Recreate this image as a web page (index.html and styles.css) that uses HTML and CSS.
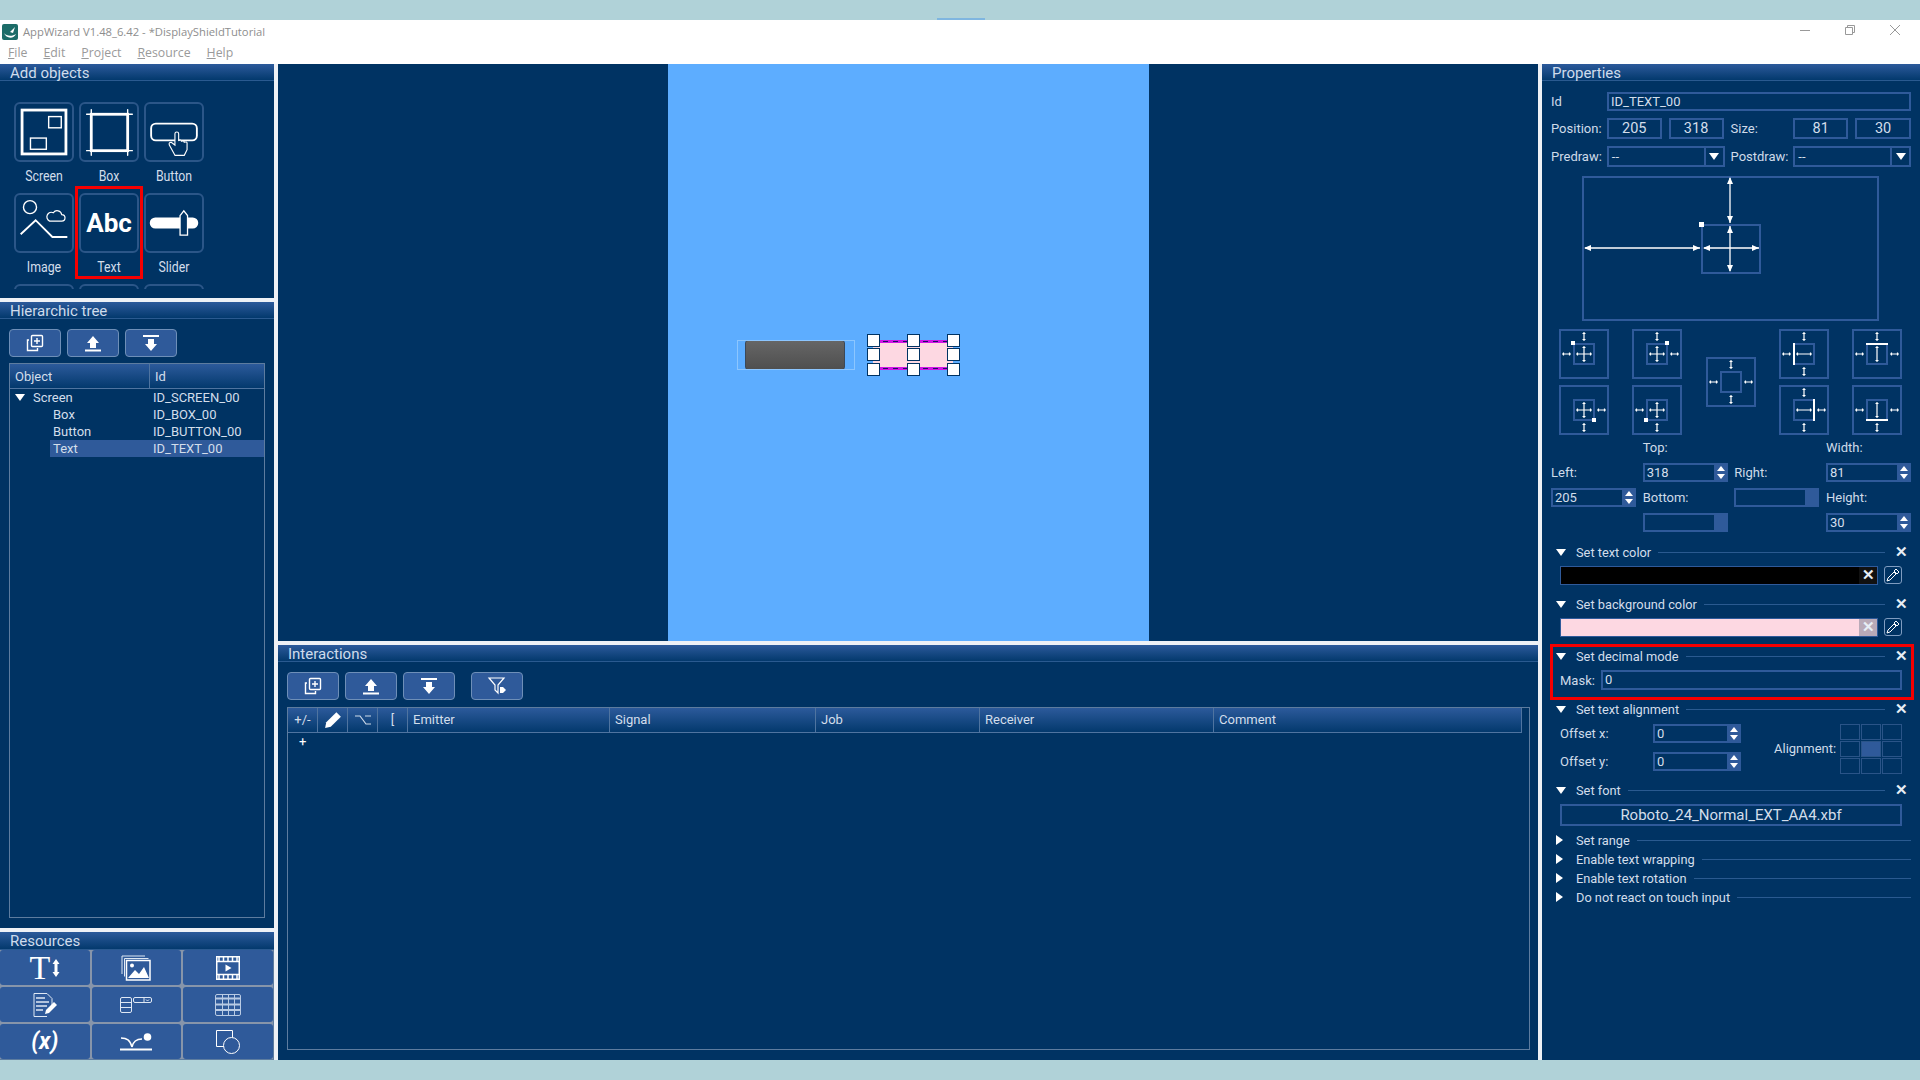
FILE: index.html

```html
<!DOCTYPE html>
<html lang="en">
<head>
    <meta charset="UTF-8">
    <title>AppWizard V1.48_6.42 - *DisplayShieldTutorial</title>
    <link rel="stylesheet" href="styles.css">
</head>
<body>
<svg class="defs" width="0" height="0">
    <symbol id="i-copy" viewBox="0 0 20 20">
        <path d="M4 7H2.5v10.500h10V15" fill="none" stroke="#fff" stroke-width="1.400"/>
        <rect x="6.500" y="2.500" width="11" height="11" rx="1" fill="none" stroke="#fff" stroke-width="1.400"/>
        <path d="M12 5v6M9 8h6" stroke="#fff" stroke-width="1.400"/>
    </symbol>
    <symbol id="i-up" viewBox="0 0 20 20">
        <path d="M10 3l6 7h-3v5H7v-5H4z" fill="#fff"/><path d="M2 17.500h16" stroke="#fff" stroke-width="2"/>
    </symbol>
    <symbol id="i-down" viewBox="0 0 20 20">
        <path d="M10 18l6-7h-3V6H7v5H4z" fill="#fff"/><path d="M2 3h16" stroke="#fff" stroke-width="2"/>
    </symbol>
    <symbol id="i-filter" viewBox="0 0 20 20">
        <path d="M2 2h15l-6 7v8l-3-3V9z" fill="none" stroke="#fff" stroke-width="1.200"/>
        <path d="M13 11h3l3 3-3 3h-3z" fill="#fff"/>
    </symbol>
    <symbol id="t-frame" viewBox="0 0 50 50">
        <rect x="1" y="1" width="48" height="48" fill="none" stroke="#2f5a9a" stroke-width="2"/>
        <rect x="15" y="15" width="20" height="20" fill="none" stroke="#2f5a9a" stroke-width="2"/>
    </symbol>
    <symbol id="t-top" viewBox="0 0 50 50"><path d="M25 3v9M23.500 4.500h3M23.500 10.500h3" stroke="#fff" stroke-width="1.200"/></symbol>
    <symbol id="t-bottom" viewBox="0 0 50 50"><path d="M25 38v9M23.500 39.500h3M23.500 45.500h3" stroke="#fff" stroke-width="1.200"/></symbol>
    <symbol id="t-left" viewBox="0 0 50 50"><path d="M3 25h9M4.500 23.500v3M10.500 23.500v3" stroke="#fff" stroke-width="1.200"/></symbol>
    <symbol id="t-right" viewBox="0 0 50 50"><path d="M38 25h9M39.500 23.500v3M45.500 23.500v3" stroke="#fff" stroke-width="1.200"/></symbol>
    <symbol id="t-cross-h" viewBox="0 0 50 50"><path d="M17 25h16M18.500 23.500v3M31.500 23.500v3" stroke="#fff" stroke-width="1.200"/></symbol>
    <symbol id="t-cross-v" viewBox="0 0 50 50"><path d="M25 17v16M23.500 18.500h3M23.500 31.500h3" stroke="#fff" stroke-width="1.200"/></symbol>
</svg>

<div class="band">
    <span class="band-mark"></span>
</div>

<div class="titlebar">
    <svg class="logo" viewBox="0 0 16 16">
        <rect width="16" height="16" rx="2" fill="#1c6c68"/>
        <path d="M2 9c2 3 8 4 12 1-2 5-10 5-12-1zM8 8l5-5-2 6z" fill="#fff"/>
    </svg>
    <span class="title-text">AppWizard V1.48_6.42 - *DisplayShieldTutorial</span>
    <div class="win-btns">
        <svg width="10" height="10" viewBox="0 0 10 10"><path d="M0 5.500h10" stroke="#999"/></svg>
        <svg width="10" height="10" viewBox="0 0 10 10"><path d="M.5 2.500h7v7h-7zM2.500 2.500v-2h7v7h-2" fill="none" stroke="#999"/></svg>
        <svg width="10" height="10" viewBox="0 0 10 10"><path d="M0 0l10 10M10 0L0 10" stroke="#999"/></svg>
    </div>
</div>
<div class="menubar">
    <span><u>F</u>ile</span>
    <span><u>E</u>dit</span>
    <span><u>P</u>roject</span>
    <span><u>R</u>esource</span>
    <span><u>H</u>elp</span>
</div>

<div class="main">
    <div class="col-left">
        <section class="panel add-objects">
            <div class="panel-head">Add objects</div>
            <div class="tiles">
                <div class="tile-cell">
                    <svg class="tile" viewBox="0 0 60 60">
                        <rect x="6.500" y="6.500" width="47" height="47" fill="none" stroke="#fff" stroke-width="3"/>
                        <rect x="35" y="13.500" width="13.500" height="12" fill="none" stroke="#fff" stroke-width="1.500"/>
                        <rect x="15.500" y="36.500" width="17" height="12" fill="none" stroke="#fff" stroke-width="1.500"/>
                    </svg>
                    <span class="tile-label">Screen</span>
                </div>
                <div class="tile-cell">
                    <svg class="tile" viewBox="0 0 60 60">
                        <rect x="11" y="11" width="39" height="39" fill="none" stroke="#fff" stroke-width="3"/>
                        <path d="M6 11h49M6 50h49M11 6v49M50 6v49" stroke="#fff" stroke-width="1.500" stroke-linecap="round"/>
                    </svg>
                    <span class="tile-label">Box</span>
                </div>
                <div class="tile-cell">
                    <svg class="tile" viewBox="0 0 60 60">
                        <rect x="5.500" y="21" width="49" height="18" rx="5" fill="none" stroke="#fff" stroke-width="2"/>
                        <path d="M31 55L25 44q-1-3 2-3l4 3V32q0-2 2-2t2 2v7q3-1 3 1q3-1 3 1q3-1 3 1v7l-3 6z" fill="#003363" stroke="#fff" stroke-width="1.200"/>
                    </svg>
                    <span class="tile-label">Button</span>
                </div>
                <div class="tile-cell">
                    <svg class="tile" viewBox="0 0 60 60">
                        <circle cx="15" cy="13" r="7" fill="none" stroke="#fff" stroke-width="1.500"/>
                        <path d="M5 42L21 27l18 18h16" fill="none" stroke="#fff" stroke-width="2"/>
                        <path d="M36 28h13a3 3 0 0 0 0-7 5 5 0 0 0-9-2 4.500 4.500 0 0 0-4 9z" fill="none" stroke="#fff" stroke-width="1.300"/>
                    </svg>
                    <span class="tile-label">Image</span>
                </div>
                <div class="tile-cell hl-cell">
                    <div class="tile tile-abc">Abc</div>
                    <span class="tile-label">Text</span>
                    <div class="hl"></div>
                </div>
                <div class="tile-cell">
                    <svg class="tile" viewBox="0 0 60 60">
                        <rect x="4" y="24" width="52" height="12" rx="6" fill="#fff"/>
                        <path d="M36.500 22l4-5 4 5v21h-8z" fill="#003363" stroke="#fff" stroke-width="1.400"/>
                    </svg>
                    <span class="tile-label">Slider</span>
                </div>
                <div class="tile-cell"><div class="tile"></div></div>
                <div class="tile-cell"><div class="tile"></div></div>
                <div class="tile-cell"><div class="tile"></div></div>
            </div>
        </section>

        <section class="panel tree">
            <div class="panel-head">Hierarchic tree</div>
            <div class="btn-row">
                <button class="tool"><svg><use href="#i-copy"/></svg></button>
                <button class="tool"><svg><use href="#i-up"/></svg></button>
                <button class="tool"><svg><use href="#i-down"/></svg></button>
            </div>
            <div class="tree-table">
                <div class="tree-head"><span>Object</span><span>Id</span></div>
                <div class="tree-row"><span class="tree-name root"><i class="tri-down"></i>Screen</span><span>ID_SCREEN_00</span></div>
                <div class="tree-row"><span class="tree-name">Box</span><span>ID_BOX_00</span></div>
                <div class="tree-row"><span class="tree-name">Button</span><span>ID_BUTTON_00</span></div>
                <div class="tree-row selected"><span class="tree-name">Text</span><span>ID_TEXT_00</span></div>
            </div>
        </section>

        <section class="panel resources">
            <div class="panel-head">Resources</div>
            <div class="res-grid">
                <div class="res-cell"><span class="res-t">T</span>
                    <svg width="8" height="18" viewBox="0 0 8 18"><path d="M4 0l3.500 5h-2v8h2L4 18 .5 13h2V5h-2z" fill="#fff"/></svg></div>
                <div class="res-cell">
                    <svg width="30" height="26" viewBox="0 0 30 26"><path d="M1 19V1h23" fill="none" stroke="#dfe8f4"/><path d="M3.500 21.500v-18h24" fill="none" stroke="#dfe8f4"/>
                        <rect x="5.500" y="5.500" width="23.500" height="19.500" fill="none" stroke="#fff" stroke-width="1.500"/><path d="M7 23l7-8 4 4 5-7 5 11z" fill="#fff"/><circle cx="11" cy="10.500" r="2" fill="#fff"/></svg></div>
                <div class="res-cell">
                    <svg width="24" height="24" viewBox="0 0 24 24"><rect x=".75" y=".75" width="22.500" height="22.500" fill="none" stroke="#fff" stroke-width="1.500"/><path d="M1 5.500h22M1 18.500h22" stroke="#fff" stroke-width="1.500"/><path d="M3 1v4M7.500 1v4M12 1v4M16.500 1v4M21 1v4M3 19v4M7.500 19v4M12 19v4M16.500 19v4M21 19v4" stroke="#fff" stroke-width="1.500"/><path d="M9.500 8.500l6 3.500-6 3.500z" fill="#fff"/></svg></div>
                <div class="res-cell">
                    <svg width="24" height="24" viewBox="0 0 24 24"><path d="M14 23.500H1V.5h13l5 5v7" fill="none" stroke="#dfe8f4"/><path d="M3 5h9M3 9h13M3 13h11M3 17h7" stroke="#dfe8f4" stroke-width="1.500"/><path d="M12 21l1-4 8-8 3 3-8 8z" fill="#fff"/></svg></div>
                <div class="res-cell">
                    <svg width="32" height="16" viewBox="0 0 32 16"><rect x=".5" y=".5" width="11" height="15" rx="1.500" fill="none" stroke="#dfe8f4"/><path d="M1 5.500h10M1 10.500h10" stroke="#dfe8f4"/><rect x="13.500" y=".5" width="18" height="5" rx="1.500" fill="none" stroke="#dfe8f4"/><path d="M24 .5v5M26 2.500l1.500 1.500L29 2.500" fill="none" stroke="#dfe8f4"/></svg></div>
                <div class="res-cell">
                    <svg width="26" height="22" viewBox="0 0 26 22"><rect x=".5" y=".5" width="25" height="21" rx="1.500" fill="none" stroke="#b9cbe4"/><path d="M0 4.500h26M0 10.500h26M0 16h26" stroke="#b9cbe4" stroke-width="2"/><path d="M7.500 0v22M13.500 0v22M19.500 0v22" stroke="#b9cbe4"/></svg></div>
                <div class="res-cell"><span class="res-x">(x)</span></div>
                <div class="res-cell">
                    <svg width="32" height="18" viewBox="0 0 32 18"><path d="M1 5c6 0 9 2 11 9M12 14c1-5 4-8 10-8" fill="none" stroke="#fff" stroke-width="1.500"/><circle cx="27.500" cy="4" r="3.800" fill="#fff"/><path d="M0 16.500h32" stroke="#fff" stroke-width="2"/></svg></div>
                <div class="res-cell">
                    <svg width="24" height="24" viewBox="0 0 24 24"><path d="M8 16.500H.5V.5h16v7" fill="none" stroke="#fff"/><circle cx="15.500" cy="15.500" r="8" fill="#2f5a9a" stroke="#fff"/></svg></div>
            </div>
        </section>
    </div>

    <div class="col-center">
        <div class="canvas">
            <div class="screen">
                <div class="w-button"></div>
                <div class="w-text">
                    <i class="handle h1"></i><i class="handle h2"></i><i class="handle h3"></i>
                    <i class="handle h4"></i><i class="handle h5"></i><i class="handle h6"></i>
                    <i class="handle h7"></i><i class="handle h8"></i><i class="handle h9"></i>
                </div>
            </div>
        </div>
        <section class="panel interactions">
            <div class="panel-head">Interactions</div>
            <div class="btn-row">
                <button class="tool"><svg><use href="#i-copy"/></svg></button>
                <button class="tool"><svg><use href="#i-up"/></svg></button>
                <button class="tool"><svg><use href="#i-down"/></svg></button>
                <button class="tool tool-filter"><svg><use href="#i-filter"/></svg></button>
            </div>
            <div class="inter-table">
                <div class="inter-head">
                    <span class="c">+/-</span>
                    <span class="c"><svg width="18" height="18" viewBox="0 0 16 16"><path d="M1 15l1-5L11 1l4 4-9 9z" fill="#fff"/></svg></span>
                    <span class="c"><svg width="16" height="10" viewBox="0 0 16 10"><path d="M0 1h5l6 8h5M10 1h6" fill="none" stroke="#cfdbe9" stroke-width="1.200"/></svg></span>
                    <span class="c">[</span>
                    <span>Emitter</span>
                    <span>Signal</span>
                    <span>Job</span>
                    <span>Receiver</span>
                    <span>Comment</span>
                </div>
                <div class="inter-add">+</div>
            </div>
        </section>
    </div>

    <section class="panel props">
        <div class="panel-head">Properties</div>
        <div class="props-body">
            <div class="prop-row id-row">
                <label>Id</label>
                <div class="field id-field">ID_TEXT_00</div>
            </div>
            <div class="prop-row pos-row">
                <label>Position:</label>
                <div class="field num">205</div>
                <div class="field num">318</div>
                <label class="size-label">Size:</label>
                <div class="field num">81</div>
                <div class="field num">30</div>
            </div>
            <div class="prop-row pos-row">
                <label>Predraw:</label>
                <div class="combo"><span>--</span><b><i class="tri-down"></i></b></div>
                <label class="size-label">Postdraw:</label>
                <div class="combo"><span>--</span><b><i class="tri-down"></i></b></div>
            </div>

            <svg class="anchor-big" width="297" height="145" viewBox="0 0 297 145">
                <rect x="1" y="1" width="295" height="143" fill="none" stroke="#2f5a9a" stroke-width="2"/>
                <rect x="120" y="49" width="58" height="48" fill="none" stroke="#2f5a9a" stroke-width="2"/>
                <path d="M148 2v45M148 50v45M3 72h115M122 72h55" stroke="#fff" stroke-width="1.300"/>
                <path d="M148 1l3 7h-6zM148 47l3-7h-6zM148 50l3 7h-6zM148 96l3-7h-6zM2 72l7-3v6zM118 72l-7-3v6zM121 72l7-3v6zM177 72l-7-3v6z" fill="#fff"/>
                <rect x="117" y="46" width="5" height="5" fill="#fff"/>
            </svg>

            <div class="anchor-tiles">
                <svg class="a-tile" viewBox="0 0 50 50"><use href="#t-frame"/><use href="#t-top"/><use href="#t-left"/><use href="#t-cross-h"/><use href="#t-cross-v"/><rect x="12" y="12" width="4" height="4" fill="#fff"/></svg>
                <svg class="a-tile" viewBox="0 0 50 50"><use href="#t-frame"/><use href="#t-top"/><use href="#t-right"/><use href="#t-cross-h"/><use href="#t-cross-v"/><rect x="33" y="12" width="4" height="4" fill="#fff"/></svg>
                <svg class="a-tile a-center" viewBox="0 0 50 50"><use href="#t-frame"/><use href="#t-top"/><use href="#t-bottom"/><use href="#t-left"/><use href="#t-right"/></svg>
                <svg class="a-tile" viewBox="0 0 50 50"><use href="#t-frame"/><use href="#t-top"/><use href="#t-bottom"/><use href="#t-left"/><use href="#t-cross-h"/><path d="M15 14v22" stroke="#fff" stroke-width="2"/></svg>
                <svg class="a-tile" viewBox="0 0 50 50"><use href="#t-frame"/><use href="#t-top"/><use href="#t-left"/><use href="#t-right"/><use href="#t-cross-v"/><path d="M14 15h22" stroke="#fff" stroke-width="2"/></svg>
                <svg class="a-tile" viewBox="0 0 50 50"><use href="#t-frame"/><use href="#t-bottom"/><use href="#t-right"/><use href="#t-cross-h"/><use href="#t-cross-v"/><rect x="33" y="33" width="4" height="4" fill="#fff"/></svg>
                <svg class="a-tile" viewBox="0 0 50 50"><use href="#t-frame"/><use href="#t-bottom"/><use href="#t-left"/><use href="#t-cross-h"/><use href="#t-cross-v"/><rect x="12" y="33" width="4" height="4" fill="#fff"/></svg>
                <svg class="a-tile" viewBox="0 0 50 50"><use href="#t-frame"/><use href="#t-top"/><use href="#t-bottom"/><use href="#t-right"/><use href="#t-cross-h"/><path d="M35 14v22" stroke="#fff" stroke-width="2"/></svg>
                <svg class="a-tile" viewBox="0 0 50 50"><use href="#t-frame"/><use href="#t-bottom"/><use href="#t-left"/><use href="#t-right"/><use href="#t-cross-v"/><path d="M14 35h22" stroke="#fff" stroke-width="2"/></svg>
            </div>

            <div class="spin-grid">
                <label class="sg-c2">Top:</label>
                <label class="sg-c4">Width:</label>
                <label>Left:</label>
                <div class="spin"><span>318</span><b></b></div>
                <label>Right:</label>
                <div class="spin"><span>81</span><b></b></div>
                <div class="spin"><span>205</span><b></b></div>
                <label>Bottom:</label>
                <div class="spin off"><span></span><b></b></div>
                <label>Height:</label>
                <div class="spin off sg-c2"><span></span><b></b></div>
                <div class="spin sg-c4"><span>30</span><b></b></div>
            </div>

            <div class="sec-head first"><i class="tri-down"></i><span>Set text color</span><hr><em class="x">&#10005;</em></div>
            <div class="color-row">
                <div class="swatch black"><em class="sw-x">&#10005;</em></div>
                <div class="picker"><svg width="14" height="14" viewBox="0 0 14 14"><path d="M1 13l1-3 6-6 2 2-6 6zM8 3l2-2 3 3-2 2z" fill="none" stroke="#fff"/></svg></div>
            </div>
            <div class="sec-head"><i class="tri-down"></i><span>Set background color</span><hr><em class="x">&#10005;</em></div>
            <div class="color-row">
                <div class="swatch pink"><em class="sw-x">&#10005;</em></div>
                <div class="picker"><svg width="14" height="14" viewBox="0 0 14 14"><path d="M1 13l1-3 6-6 2 2-6 6zM8 3l2-2 3 3-2 2z" fill="none" stroke="#fff"/></svg></div>
            </div>
            <div class="decimal">
                <div class="sec-head"><i class="tri-down"></i><span>Set decimal mode</span><hr><em class="x">&#10005;</em></div>
                <div class="mask-row"><label>Mask:</label><div class="field mask">0</div></div>
                <div class="hl hl-decimal"></div>
            </div>
            <div class="sec-head"><i class="tri-down"></i><span>Set text alignment</span><hr><em class="x">&#10005;</em></div>
            <div class="align-row">
                <div class="offsets">
                    <div class="offset"><label>Offset x:</label><div class="spin"><span>0</span><b></b></div></div>
                    <div class="offset"><label>Offset y:</label><div class="spin"><span>0</span><b></b></div></div>
                </div>
                <label class="align-label">Alignment:</label>
                <div class="align-grid">
                    <i></i><i></i><i></i><i></i><i class="on"></i><i></i><i></i><i></i><i></i>
                </div>
            </div>
            <div class="sec-head"><i class="tri-down"></i><span>Set font</span><hr><em class="x">&#10005;</em></div>
            <div class="font-box">Roboto_24_Normal_EXT_AA4.xbf</div>
            <div class="sec-head closed first-closed"><i class="tri-right"></i><span>Set range</span><hr></div>
            <div class="sec-head closed"><i class="tri-right"></i><span>Enable text wrapping</span><hr></div>
            <div class="sec-head closed"><i class="tri-right"></i><span>Enable text rotation</span><hr></div>
            <div class="sec-head closed"><i class="tri-right"></i><span>Do not react on touch input</span><hr></div>
        </div>
    </section>
</div>

<div class="band"></div>
</body>
</html>
```

FILE: styles.css

```css
* {
    box-sizing: border-box;
}

body {
    margin: 0;
    width: 1920px;
    height: 1080px;
    overflow: hidden;
    display: flex;
    flex-direction: column;
    background: #fff;
    font-family: Roboto, sans-serif;
    font-size: 13px;
    color: #d3deeb;
}

.defs {
    position: absolute;
}

.band {
    height: 20px;
    background: #b0d2d8;
    position: relative;
}

.band-mark {
    position: absolute;
    left: 937px;
    bottom: 0;
    width: 48px;
    height: 2px;
    background: #7fb6e0;
}

.titlebar {
    height: 23px;
    display: flex;
    align-items: center;
    padding-left: 2px;
    background: #fff;
}

.logo {
    flex: none;
    width: 16px;
    height: 16px;
}

.title-text {
    margin-left: 5px;
    font-family: "Open Sans", sans-serif;
    font-size: 11.250px;
    color: #8e8e8e;
}

.win-btns {
    margin-left: auto;
    display: flex;
    gap: 35px;
    padding-right: 20px;
    align-items: center;
    position: relative;
    top: -2px;
}

.menubar {
    height: 21px;
    display: flex;
    gap: 16px;
    padding: 0 0 2px 8px;
    align-items: center;
    font-family: "Open Sans", sans-serif;
    font-size: 12.300px;
    color: #9a9a9a;
    background: #fff;
}

.main {
    flex: 1;
    display: flex;
    gap: 4px;
    background: #eef1f6;
    min-height: 0;
}

.panel {
    background: #003363;
    overflow: hidden;
}

.panel-head {
    height: 17px;
    padding-left: 10px;
    font-size: 15px;
    line-height: 18px;
    color: #cfdcec;
    background: linear-gradient(#2c5a9b, #03396d);
    border-bottom: 1px solid #2a5a90;
}

.col-left {
    width: 274px;
    display: flex;
    flex-direction: column;
    gap: 4px;
}

.add-objects {
    height: 234px;
}

.tiles {
    margin: 21px 0 0 14px;
    height: 187px;
    overflow: hidden;
    display: grid;
    grid-template-columns: 60px 60px 60px;
    grid-auto-rows: 86px;
    column-gap: 5px;
    row-gap: 5px;
}

.tile-cell {
    position: relative;
    text-align: center;
}

.tile {
    display: block;
    width: 60px;
    height: 60px;
    border: 2px solid #2b5688;
    border-radius: 6px;
}

.tile-abc {
    font-size: 26px;
    font-weight: 700;
    line-height: 56px;
    color: #fff;
}

.tile-label {
    display: block;
    margin-top: 6px;
    font-size: 14px;
    transform: scaleX(0.88);
    color: #d3deeb;
}

.hl {
    position: absolute;
    border: 3px solid #f60000;
    pointer-events: none;
}

.hl-cell .hl {
    left: -4px;
    right: -4px;
    top: -7px;
    bottom: 0;
}

.tree {
    height: 626px;
}

.btn-row {
    display: flex;
    gap: 6px;
    padding: 10px 0 0 9px;
}

.tool {
    width: 52px;
    height: 28px;
    padding: 0;
    display: flex;
    align-items: center;
    justify-content: center;
    background: #2f5a9a;
    border: 1px solid #6e8fb8;
    border-radius: 4px;
}

.tool svg {
    width: 20px;
    height: 20px;
}

.tool-filter {
    margin-left: 10px;
}

.tree-table {
    margin: 6px 0 0 9px;
    width: 256px;
    height: 555px;
    border: 1px solid #5d7c9f;
}

.tree-head {
    height: 25px;
    display: grid;
    grid-template-columns: 140px 1fr;
    line-height: 25px;
    background: linear-gradient(#2c5a9b, #03396d);
    border-bottom: 1px solid #4f74a0;
}

.tree-head span {
    padding-left: 5px;
}

.tree-head span:first-child {
    border-right: 1px solid #4f74a0;
}

.tree-row {
    height: 17px;
    display: grid;
    grid-template-columns: 140px 1fr;
    line-height: 17px;
}

.tree-row span:last-child {
    padding-left: 3px;
}

.tree-name {
    padding-left: 43px;
}

.tree-name.root {
    padding-left: 5px;
    display: flex;
    align-items: center;
}

.tree-name.root .tri-down {
    margin-right: 8px;
}

.tree-row.selected {
    background: linear-gradient(to right, #003363 40px, #2f5a9a 40px);
}

.tri-down {
    display: inline-block;
    flex: none;
    width: 0;
    height: 0;
    border-left: 5px solid transparent;
    border-right: 5px solid transparent;
    border-top: 7px solid #fff;
}

.tri-right {
    display: inline-block;
    flex: none;
    width: 0;
    height: 0;
    border-top: 5px solid transparent;
    border-bottom: 5px solid transparent;
    border-left: 7px solid #fff;
}

.resources {
    height: 128px;
    display: flex;
    flex-direction: column;
}

.resources .panel-head {
    flex: none;
    height: 18px;
}

.res-grid {
    flex: 1;
    display: grid;
    grid-template-columns: 1fr 1fr 1fr;
    grid-template-rows: 1fr 1fr 1fr;
    gap: 2px;
    background: #8795aa;
    border: 1px solid #5d7c9f;
    border-top: 0;
    border-left: 0;
}

.res-cell {
    display: flex;
    align-items: center;
    justify-content: center;
    gap: 2px;
    background: #2f5a9a;
    border-radius: 3px;
    color: #fff;
}

.res-t {
    font-family: "Liberation Serif", serif;
    font-size: 34px;
    line-height: 30px;
}

.res-x {
    font-size: 23px;
    font-weight: 700;
    font-style: italic;
    line-height: 28px;
}

.col-center {
    width: 1260px;
    display: flex;
    flex-direction: column;
    gap: 4px;
}

.canvas {
    height: 577px;
    display: flex;
    justify-content: center;
    background: #003363;
}

.screen {
    position: relative;
    width: 481px;
    background: #5dadff;
}

.w-button {
    position: absolute;
    left: 77px;
    top: 276px;
    width: 100px;
    height: 30px;
    background: linear-gradient(#666, #4f4f4f);
    border: 1px solid #3b4858;
    border-radius: 3px;
}

.w-button::before {
    content: "";
    position: absolute;
    left: -9px;
    right: -11px;
    top: -1px;
    bottom: -1px;
    border: 1px solid #8cc6ff;
}

.w-text {
    position: absolute;
    left: 205px;
    top: 276px;
    width: 80px;
    height: 30px;
    background: #fdd8e2;
    border-top: 3px solid #d015e6;
    border-bottom: 3px solid #d015e6;
}

.w-text::before,
.w-text::after {
    content: "";
    position: absolute;
    left: 0;
    right: 0;
    height: 1px;
    background: repeating-linear-gradient(90deg, #1b1464 0 5px, transparent 5px 10px);
}

.w-text::before {
    top: -2px;
}

.w-text::after {
    bottom: -2px;
}

.handle {
    position: absolute;
    z-index: 1;
    width: 13px;
    height: 13px;
    background: #fff;
    border: 1px solid #003363;
}

.h1, .h4, .h7 { left: -6px; }
.h2, .h5, .h8 { left: 34px; }
.h3, .h6, .h9 { left: 74px; }
.h1, .h2, .h3 { top: -9px; }
.h4, .h5, .h6 { top: 5px; }
.h7, .h8, .h9 { top: 20px; }

.interactions {
    height: 415px;
}

.inter-table {
    margin: 7px 0 0 9px;
    width: 1243px;
    height: 343px;
    border: 1px solid #5d7c9f;
}

.inter-head {
    width: 1234px;
    height: 25px;
    display: grid;
    grid-template-columns: 30px 30px 30px 30px 202px 206px 164px 234px 308px;
    align-items: stretch;
    line-height: 24px;
    background: linear-gradient(#2c5a9b, #03396d);
    border-bottom: 1px solid #4f74a0;
}

.inter-head span {
    padding-left: 5px;
    border-right: 1px solid #4f74a0;
}

.inter-head .c {
    padding: 0;
    display: flex;
    align-items: center;
    justify-content: center;
}

.inter-add {
    padding-left: 11px;
    line-height: 18px;
    color: #fff;
}

.props {
    width: 378px;
}

.props-body {
    padding: 11px 9px 0;
}

label {
    color: #cfdbe9;
}

.prop-row {
    display: flex;
    align-items: center;
    height: 19px;
}

.prop-row label:first-child {
    width: 56px;
}

.pos-row {
    height: 21px;
    margin-top: 7px;
}

.field {
    height: 100%;
    padding-left: 2px;
    border: 2px solid #2f5a9a;
    line-height: 15px;
}

.id-field {
    flex: 1;
}

.num {
    width: 55px;
    margin-right: 7px;
    padding: 0;
    text-align: center;
    font-size: 14.500px;
    line-height: 17px;
}

.pos-row .num:last-child {
    margin-right: 0;
    width: 56px;
}

.size-label {
    width: 63px;
}

.combo {
    width: 118px;
    height: 21px;
    margin-right: 6px;
    display: flex;
    border: 2px solid #2f5a9a;
    line-height: 17px;
}

.combo:last-child {
    margin-right: 0;
}

.combo span {
    flex: 1;
    padding-left: 3px;
}

.combo b {
    width: 19px;
    display: flex;
    align-items: center;
    justify-content: center;
    border-left: 2px solid #2f5a9a;
}

.anchor-big {
    display: block;
    margin: 9px 0 0 31px;
}

.anchor-tiles {
    margin: 8px 0 0 8px;
    display: grid;
    grid-template-columns: repeat(5, 50px);
    grid-template-rows: 50px 50px;
    column-gap: 23.250px;
    row-gap: 6px;
}

.a-tile {
    width: 50px;
    height: 50px;
}

.a-center {
    grid-column: 3;
    grid-row: 1 / span 2;
    align-self: center;
}

.a-tile:nth-child(6) {
    grid-column: 1;
    grid-row: 2;
}

.a-tile:nth-child(7) {
    grid-column: 2;
    grid-row: 2;
}

.a-tile:nth-child(8) {
    grid-column: 4;
    grid-row: 2;
}

.a-tile:nth-child(9) {
    grid-column: 5;
    grid-row: 2;
}

.spin-grid {
    margin-top: 3px;
    display: grid;
    grid-template-columns: repeat(4, 85px);
    grid-template-rows: repeat(4, 19px);
    column-gap: 6.670px;
    row-gap: 6px;
    align-items: center;
}

.sg-c2 {
    grid-column: 2;
}

.sg-c4 {
    grid-column: 4;
}

.spin {
    height: 19px;
    display: flex;
    border: 2px solid #2f5a9a;
    line-height: 15px;
}

.spin span {
    flex: 1;
    padding-left: 2px;
}

.spin b {
    width: 14px;
    margin: -2px -2px -2px 0;
    background: #2f5a9a;
    position: relative;
}

.spin b::before,
.spin b::after {
    content: "";
    position: absolute;
    left: 3px;
    border-left: 4px solid transparent;
    border-right: 4px solid transparent;
}

.spin b::before {
    top: 3px;
    border-bottom: 5px solid #fff;
}

.spin b::after {
    bottom: 3px;
    border-top: 5px solid #fff;
}

.spin.off b::before,
.spin.off b::after {
    display: none;
}

.sec-head {
    height: 16px;
    margin-top: 11px;
    display: flex;
    align-items: center;
    padding-left: 5px;
    font-size: 12.800px;
    position: relative;
}

.sec-head.first {
    margin-top: 12px;
}

.sec-head span {
    margin-left: 10px;
    color: #d3deeb;
}

.sec-head hr {
    flex: 1;
    height: 1px;
    margin: 0 2px 0 7px;
    border: 0;
    background: #2a5a90;
}

.sec-head .x,
.sw-x {
    font-style: normal;
    font-weight: 700;
    font-size: 15px;
    color: #e8eef5;
}

.sec-head .x {
    width: 20px;
    text-align: center;
    margin-left: 4px;
}

.sec-head.closed {
    margin-top: 3px;
}

.sec-head.closed .tri-right {
    margin-right: 3px;
}

.sec-head.closed hr {
    margin-right: 0;
}

.sec-head.first-closed {
    margin-top: 6px;
}

.color-row {
    margin: 6px 9px 0;
    height: 19px;
    display: flex;
    gap: 6px;
}

.swatch {
    flex: 1;
    display: flex;
    align-items: center;
    justify-content: flex-end;
    border: 1px solid #2f5a9a;
}

.swatch.black {
    background: #000;
}

.swatch.pink {
    background: #fdd8e2;
}

.sw-x {
    width: 18px;
    height: 100%;
    line-height: 17px;
    text-align: center;
}

.black .sw-x {
    background: #111;
}

.pink .sw-x {
    background: #b9aab8;
}

.picker {
    width: 18px;
    height: 18px;
    display: flex;
    align-items: center;
    justify-content: center;
    border: 1px solid #7f9cc0;
    border-radius: 3px;
}

.decimal {
    position: relative;
}

.hl-decimal {
    left: -1px;
    right: -3px;
    top: -4px;
    bottom: -10px;
}

.mask-row {
    margin: 6px 9px 0;
    height: 20px;
    display: flex;
    align-items: center;
}

.mask-row label {
    width: 41px;
}

.mask {
    flex: 1;
    line-height: 16px;
}

.align-row {
    margin: 7px 9px 0;
    height: 47px;
    display: flex;
    align-items: flex-start;
}

.offset {
    display: flex;
    align-items: center;
    height: 19px;
    margin-bottom: 9px;
}

.offset label {
    width: 93px;
}

.offset .spin {
    width: 88px;
}

.align-label {
    margin: 17px 0 0 33px;
    width: 66px;
}

.align-grid {
    display: grid;
    grid-template-columns: repeat(3, 20px);
    grid-template-rows: repeat(3, 16px);
    gap: 1px;
}

.align-grid i {
    border: 1px solid #2a5488;
}

.align-grid .on {
    background: #2f5a9a;
}

.font-box {
    margin: 6px 9px 0;
    height: 22px;
    border: 2px solid #2f5a9a;
    text-align: center;
    font-size: 15px;
    line-height: 18px;
}
```
